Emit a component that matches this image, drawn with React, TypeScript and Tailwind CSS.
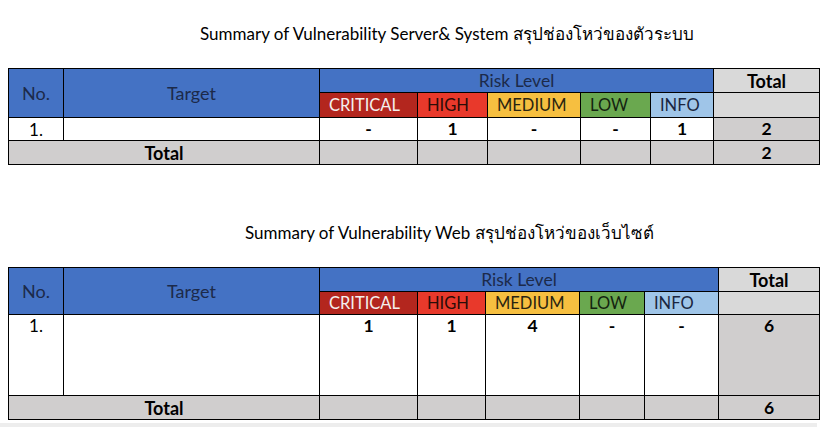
import React from "react";

const B = "border-r border-b border-black";

function Cell({
  className = "",
  children,
}: {
  className?: string;
  children?: React.ReactNode;
}) {
  return <div className={`${B} flex items-center justify-center ${className}`}>{children}</div>;
}

type Props = {
  cols: string;
  rows: string;
  values: string[];
  total: string;
  top?: boolean;
};

function SummaryTable({ cols, rows, values, total, top }: Props) {
  const align = top ? "items-start pt-[2px]" : "items-center";
  return (
    <div className={`grid ${cols} ${rows} border-l border-t border-black w-max`}>
      <Cell className="row-span-2 bg-[#4472c4] text-[18px] text-[#1c2a4a]">No.</Cell>
      <Cell className="row-span-2 bg-[#4472c4] text-[18px] text-[#1c2a4a]">Target</Cell>
      <Cell className="col-span-5 bg-[#4472c4] text-[17.5px] text-[#1c2a4a]">Risk Level</Cell>
      <Cell className="bg-[#d9d9d9] font-bold text-[18px] text-black">Total</Cell>
      <Cell className="bg-[#b3261e] text-[16.5px] text-[#f4f0ee] !justify-start pl-[9px]">CRITICAL</Cell>
      <Cell className="bg-[#e8392b] text-[16.5px] text-[#2a0d08] !justify-start pl-[9px]">HIGH</Cell>
      <Cell className="bg-[#f6bf40] text-[16.5px] text-[#2a2410] !justify-start pl-[9px]">MEDIUM</Cell>
      <Cell className="bg-[#6aa84f] text-[16.5px] text-[#142310] !justify-start pl-[9px]">LOW</Cell>
      <Cell className="bg-[#9fc5e8] text-[16.5px] text-[#1a2540] !justify-start pl-[9px]">INFO</Cell>
      <Cell className="bg-[#d9d9d9]" />
      <div className={`${B} flex ${align} justify-center text-[17px]`}>1.</div>
      <div className={`${B}`} />
      {values.map((v, i) => (
        <div key={i} className={`${B} flex ${align} justify-center font-bold text-[17.5px]`}>
          {v}
        </div>
      ))}
      <div className={`${B} flex ${align} justify-center font-bold text-[17.5px] bg-[#d0cece]`}>{total}</div>
      <Cell className="col-span-2 bg-[#d0cece] font-bold text-[18px]">Total</Cell>
      <Cell className="bg-[#d0cece]" />
      <Cell className="bg-[#d0cece]" />
      <Cell className="bg-[#d0cece]" />
      <Cell className="bg-[#d0cece]" />
      <Cell className="bg-[#d0cece]" />
      <Cell className="bg-[#d0cece] font-bold text-[17.5px]">{total}</Cell>
    </div>
  );
}

export default function App() {
  return (
    <div className="w-[833px] h-[427px] bg-white overflow-hidden text-black font-['Lato','Noto_Sans','Noto_Sans_CJK_SC',sans-serif] leading-none">
      <div className="pl-[8px] pt-[22px]">
        <div className="h-[22px] flex items-center pl-[192px] text-[17px]">
          Summary of Vulnerability Server&amp; System สรุปช่องโหว่ของตัวระบบ
        </div>
        <div className="mt-[24px]">
          <SummaryTable
            cols="grid-cols-[55px_256px_98px_70px_93px_70px_63px_106px]"
            rows="grid-rows-[24px_25px_23px_24px]"
            values={["-", "1", "-", "-", "1"]}
            total="2"
          />
        </div>
        <div className="mt-[56px] h-[22px] flex items-center pl-[237px] text-[17px]">
          Summary of Vulnerability Web สรุปช่องโหว่ของเว็บไซต์
        </div>
        <div className="mt-[24px]">
          <SummaryTable
            cols="grid-cols-[55px_256px_98px_68px_94px_65px_74px_101px]"
            rows="grid-rows-[24px_23px_81px_24px]"
            values={["1", "1", "4", "-", "-"]}
            total="6"
            top
          />
        </div>
        <div className="mt-[3px] h-[4px] w-[817px] -ml-[8px] bg-[#ededed]" />
      </div>
    </div>
  );
}
